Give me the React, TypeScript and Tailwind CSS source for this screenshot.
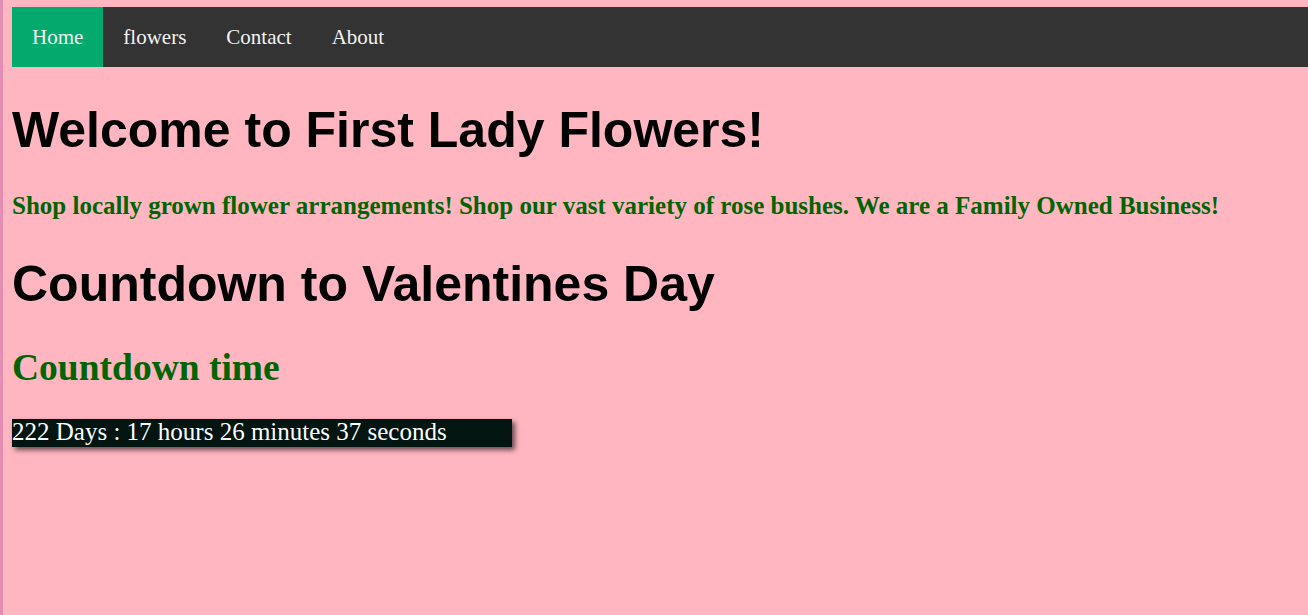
const NAV_LINKS = ['Home', 'flowers', 'Contact', 'About'];

export default function App() {
  return (
    <div className="min-h-[615px] bg-[#ffb6c1] border-l-[3px] border-[#e28db1] pl-[9px] pt-[7px] overflow-hidden">
      <nav className="flex bg-[#333333] h-[60px] mr-[-20px]">
        {NAV_LINKS.map((label, i) => (
          <a
            key={label}
            href="#"
            className={`flex items-center px-[20px] pt-[2px] text-[21px] text-[#f2f2f2] font-['Liberation_Serif',serif] ${
              i === 0 ? 'bg-[#04aa6d]' : ''
            }`}
          >
            {label}
          </a>
        ))}
      </nav>

      <h1 className="mt-[34px] text-[50px] leading-[58px] font-bold text-black font-['Liberation_Sans',Arial,sans-serif]">
        Welcome to First Lady Flowers!
      </h1>
      <p className="mt-[32px] text-[25px] leading-[29px] font-bold text-[#006400] font-['Liberation_Serif',serif]">
        Shop locally grown flower arrangements! Shop our vast variety of rose bushes. We are a Family Owned Business!
      </p>

      <h2 className="mt-[35px] text-[50px] leading-[58px] font-bold text-black font-['Liberation_Sans',Arial,sans-serif]">
        Countdown to Valentines Day
      </h2>
      <h3 className="mt-[33px] text-[37.5px] leading-[43px] font-bold text-[#006400] font-['Liberation_Serif',serif]">
        Countdown time
      </h3>

      <div className="mt-[30px] w-[500px] h-[28px] bg-[#021510] text-white text-[25px] leading-[26px] font-['Liberation_Serif',serif] shadow-[3px_3px_5px_rgba(0,0,0,0.6)]">
        222 Days : 17 hours 26 minutes 37 seconds
      </div>
    </div>
  );
}
